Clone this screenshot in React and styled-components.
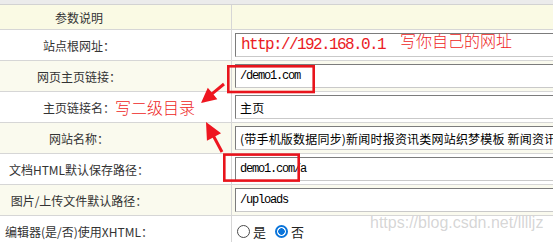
import React from "react";
import styled, { createGlobalStyle } from "styled-components";

const GlobalStyle = createGlobalStyle`
  html, body {
    margin: 0;
    padding: 0;
    background: #fff;
    overflow: hidden;
  }
`;

const Page = styled.div`
  position: relative;
  width: 553px;
  height: 242px;
  overflow: hidden;
  font-family: "Noto Sans CJK SC", "Liberation Sans", sans-serif;
`;

const TopBar = styled.div`
  height: 4px;
  background: #ebebeb;
  border-bottom: 1px solid #d2d2d2;
`;

const Row = styled.div`
  display: grid;
  grid-template-columns: 232px 1fr;
  height: ${(p) => (p.$head ? 24 : 30)}px;
  border-bottom: 1px solid #d6d6d6;
  background: ${(p) => (p.$head ? "#fafae4" : p.$alt ? "#fafaee" : "#fff")};
`;

const Label = styled.div`
  display: flex;
  align-items: center;
  justify-content: center;
  padding-right: 73px;
  border-right: 1px solid #d6d6d6;
  font-size: 12px;
  color: #333;
  white-space: nowrap;
`;

const Cell = styled.div`
  display: flex;
  align-items: center;
  padding-left: 3px;
  min-width: 0;
`;

const Field = styled.input`
  box-sizing: border-box;
  flex: none;
  width: 420px;
  height: 24px;
  margin: 0;
  padding: 0 ${(p) => (p.$big ? 5 : 4)}px;
  border: 1px solid;
  border-color: #7c7c7c #c9c9c9 #c9c9c9 #7c7c7c;
  border-radius: 0;
  background: #fff;
  outline: none;
  color: ${(p) => (p.$red ? "#ea1c24" : "#000")};
  font-family: ${(p) =>
    p.$mono
      ? '"Liberation Mono", "Noto Sans CJK SC", monospace'
      : '"Noto Sans CJK SC", "Liberation Sans", sans-serif'};
  font-size: ${(p) => (p.$big ? 16 : 12)}px;
  letter-spacing: ${(p) => (p.$big ? -1.6 : p.$mono ? -1.2 : 0.2)}px;
`;

const RadioGroup = styled.div`
  display: flex;
  align-items: center;
  padding-left: 5px;
  font-size: 13px;
  color: #222;
`;

const RadioOption = styled.label`
  display: flex;
  align-items: center;
  gap: 3px;
  margin-right: 9px;
`;

const RadioDot = styled.span`
  box-sizing: border-box;
  width: 13px;
  height: 13px;
  border-radius: 50%;
  border: ${(p) => (p.$on ? "2px solid #0a74da" : "1px solid #4a4a4a")};
  background: ${(p) =>
    p.$on
      ? "radial-gradient(circle, #0a74da 0 3px, #fff 3.5px)"
      : "#fff"};
`;

const Overlay = styled.svg`
  position: absolute;
  left: 0;
  top: 0;
  pointer-events: none;
`;

const Note = styled.span`
  position: absolute;
  left: ${(p) => p.$x}px;
  top: ${(p) => p.$y}px;
  font-family: "Noto Sans CJK SC", sans-serif;
  font-size: 16px;
  font-weight: 300;
  line-height: 16px;
  color: #ee1d25;
  white-space: nowrap;
`;

const Watermark = styled.span`
  position: absolute;
  left: 370px;
  top: 215px;
  font-family: "Liberation Sans", Arial, sans-serif;
  font-size: 16px;
  line-height: 16px;
  color: rgba(150, 150, 150, 0.4);
  white-space: nowrap;
`;

function arrow(tx, ty, hx, hy, headLen, headW, shaftW) {
  const dx = hx - tx;
  const dy = hy - ty;
  const len = Math.hypot(dx, dy);
  const ux = dx / len;
  const uy = dy / len;
  const px = -uy;
  const py = ux;
  const bx = hx - ux * headLen;
  const by = hy - uy * headLen;
  const pt = (x, y, k) => `${x + px * k},${y + py * k}`;
  return [
    pt(tx, ty, shaftW / 2),
    pt(bx, by, shaftW / 2),
    pt(bx, by, headW / 2),
    `${hx},${hy}`,
    pt(bx, by, -headW / 2),
    pt(bx, by, -shaftW / 2),
    pt(tx, ty, -shaftW / 2),
  ].join(" ");
}

const rows = [
  { label: "站点根网址：", value: "http://192.168.0.1", mono: true, big: true, red: true },
  { label: "网页主页链接：", value: "/demo1.com", mono: true, alt: true },
  { label: "主页链接名：", value: "主页" },
  {
    label: "网站名称：",
    value: "(带手机版数据同步)新闻时报资讯类网站织梦模板 新闻资讯类网站",
    alt: true,
  },
  { label: "文档HTML默认保存路径：", value: "demo1.com/a", mono: true },
  { label: "图片/上传文件默认路径：", value: "/uploads", mono: true, alt: true },
];

export default function App() {
  return (
    <Page>
      <GlobalStyle />
      <TopBar />
      <Row $head>
        <Label>参数说明</Label>
        <Cell />
      </Row>
      {rows.map((r) => (
        <Row key={r.label} $alt={r.alt}>
          <Label>{r.label}</Label>
          <Cell>
            <Field
              readOnly
              value={r.value}
              $mono={r.mono}
              $big={r.big}
              $red={r.red}
            />
          </Cell>
        </Row>
      ))}
      <Row>
        <Label>编辑器(是/否)使用XHTML：</Label>
        <RadioGroup>
          <RadioOption>
            <RadioDot />
            是
          </RadioOption>
          <RadioOption>
            <RadioDot $on />
            否
          </RadioOption>
        </RadioGroup>
      </Row>

      <Overlay width="553" height="242" viewBox="0 0 553 242">
        <g fill="none" stroke="#e8141c" strokeWidth="2.6">
          <rect x="228.3" y="66.3" width="85.4" height="25.7" />
          <rect x="224.3" y="154.6" width="74.4" height="26" />
        </g>
        <g fill="#ee1620">
          <polygon points={arrow(224, 84, 201, 103, 15, 15, 3)} />
          <polygon points={arrow(222, 152, 206, 122, 17, 16, 3)} />
        </g>
      </Overlay>
      <Note $x={400} $y={32}>写你自己的网址</Note>
      <Note $x={115} $y={99}>写二级目录</Note>
      <Watermark>https://blog.csdn.net/lllljz</Watermark>
    </Page>
  );
}
